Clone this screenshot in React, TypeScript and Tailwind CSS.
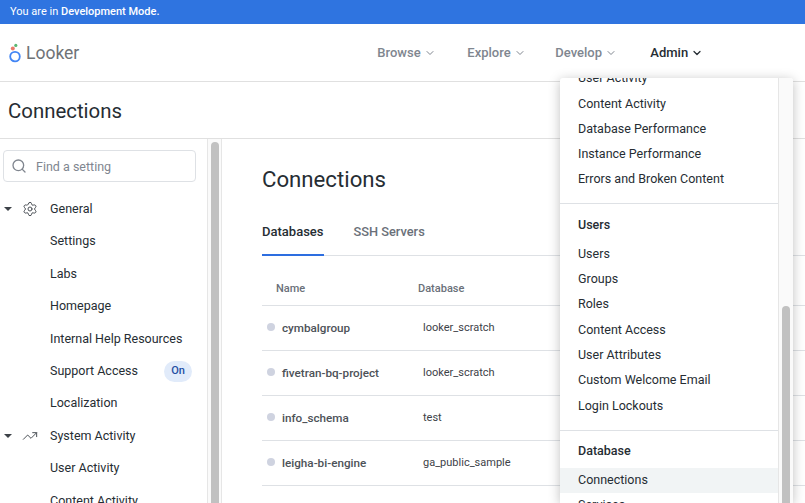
import { ChevronDown, Search, Settings, TrendingUp } from 'lucide-react';

type SideItem = {
    label: string;
    icon?: 'gear' | 'trend';
    badge?: string;
};

const sideItems: SideItem[] = [
    { label: 'General', icon: 'gear' },
    { label: 'Settings' },
    { label: 'Labs' },
    { label: 'Homepage' },
    { label: 'Internal Help Resources' },
    { label: 'Support Access', badge: 'On' },
    { label: 'Localization' },
    { label: 'System Activity', icon: 'trend' },
    { label: 'User Activity' },
    { label: 'Content Activity' },
];

const rows = [
    { name: 'cymbalgroup', db: 'looker_scratch' },
    { name: 'fivetran-bq-project', db: 'looker_scratch' },
    { name: 'info_schema', db: 'test' },
    { name: 'leigha-bi-engine', db: 'ga_public_sample' },
];

const NavItem = ({ label, active }: { label: string; active?: boolean }) => (
    <div className={`flex items-center gap-[3px] text-[13px] font-medium ${active ? 'text-[#262d33]' : 'text-[#80868f]'}`}>
        <span>{label}</span>
        <ChevronDown className="w-3 h-3" strokeWidth={active ? 2.5 : 2} />
    </div>
);

const MenuItem = ({ label, selected }: { label: string; selected?: boolean }) => (
    <div className={`h-[25.3px] flex items-center pl-[18px] text-[12.5px] text-[#262d33] ${selected ? 'bg-[#f1f4f5]' : ''}`}>
        {label}
    </div>
);

const MenuHeader = ({ label }: { label: string }) => (
    <div className="h-[25px] flex items-center pl-[18px] text-[12.5px] font-medium text-[#262d33]">
        {label}
    </div>
);

const Logo = () => (
    <div className="flex items-center gap-[2px]">
        <svg width="14" height="20" viewBox="0 0 14 20" fill="none">
            <circle cx="7" cy="13.6" r="4.8" stroke="#4285f4" strokeWidth="1.8" />
            <circle cx="4.8" cy="5.6" r="2" fill="#ea7a6a" />
            <circle cx="7.8" cy="2.4" r="1.6" fill="#5cb874" />
        </svg>
        <span className="ml-[2px] pt-[2px] text-[17.5px] leading-none text-[#6f7377]">Looker</span>
    </div>
);

export default function App() {
    return (
        <div className="relative w-[805px] h-[503px] overflow-hidden bg-white flex flex-col font-['Roboto',sans-serif]">
            <div className="h-6 shrink-0 bg-[#2f74e0] text-white text-[11px] leading-6 pl-[10px] pb-[2px]">
                You are in <span className="font-medium">Development Mode.</span>
            </div>

            <div className="h-[58px] shrink-0 flex items-center border-b border-[#e0e0e0] pl-[8px]">
                <Logo />
                <div className="ml-[298px] flex items-center w-[340px]">
                    <div className="w-[90px]"><NavItem label="Browse" /></div>
                    <div className="w-[88px]"><NavItem label="Explore" /></div>
                    <div className="w-[95px]"><NavItem label="Develop" /></div>
                    <NavItem label="Admin" active />
                </div>
            </div>

            <div className="h-[57px] shrink-0 flex items-center border-b border-[#e0e0e0] pl-2 pt-[3px] text-[20.4px] text-[#262d33]">
                Connections
            </div>

            <div className="flex flex-1 min-h-0">
                <div className="w-[207px] shrink-0 pl-[3px] pr-[11px] pt-[11px] overflow-hidden">
                    <div className="h-8 flex items-center border border-[#dee1e5] rounded-[4px] pl-[7px] gap-[9px] text-[12.5px] text-[#80868f]">
                        <Search className="w-4 h-4 text-[#80868f]" />
                        <span className="pt-[2px]">Find a setting</span>
                    </div>
                    <div className="mt-[11px] -ml-[3px]">
                        {sideItems.map((item) => (
                            <div key={item.label} className="h-[32.45px] shrink-0 flex items-center text-[12.5px] text-[#262d33]">
                                <div className="w-[50px] shrink-0 flex items-center pl-1">
                                    {item.icon && (
                                        <>
                                            <span className="w-0 h-0 border-x-[4px] border-x-transparent border-t-[4px] border-t-[#3d4248]" />
                                            <span className="ml-[10px]">
                                                {item.icon === 'gear' ? (
                                                    <Settings className="w-4 h-4 text-[#4d5258]" strokeWidth={1.5} />
                                                ) : (
                                                    <TrendingUp className="w-4 h-4 text-[#4d5258]" strokeWidth={1.5} />
                                                )}
                                            </span>
                                        </>
                                    )}
                                </div>
                                <span>{item.label}</span>
                                {item.badge && (
                                    <span className="ml-auto mr-[4px] w-7 h-[21px] rounded-full bg-[#e1ebfa] text-[#1f4fa3] text-[11px] font-medium flex items-center justify-center">
                                        {item.badge}
                                    </span>
                                )}
                            </div>
                        ))}
                    </div>
                </div>

                <div className="w-[15px] shrink-0 border-x border-[#e6e6e6] bg-[#fafafa] pt-[3px] flex justify-center">
                    <div className="w-2 h-full rounded-t-full bg-[#c1c1c1]" />
                </div>

                <div className="flex-1 pl-[40px] pt-[26px]">
                    <div className="text-[22.2px] leading-[28px] text-[#262d33]">Connections</div>
                    <div className="mt-[24px] flex gap-[30px] border-b border-[#dee1e5] h-[39px] text-[13px] font-medium">
                        <div className="h-[39px] pt-[5px] border-b-2 border-[#2d6ee0] text-[#262d33]">Databases</div>
                        <div className="pt-[5px] text-[12.8px] text-[#6a7079]">SSH Servers</div>
                    </div>
                    <div className="mt-[16px] h-[34px] flex items-center border-b border-[#dee1e5] pt-[1px] text-[11px] font-medium text-[#6a7079]">
                        <div className="w-[156px] pl-[14px]">Name</div>
                        <div>Database</div>
                    </div>
                    {rows.map((row) => (
                        <div key={row.name} className="h-[45px] flex items-center border-b border-[#dee1e5]">
                            <div className="w-[161px] flex items-center pl-[5px] gap-[7px] text-[11.7px] font-medium text-[#4d5258]">
                                <span className="w-2 h-2 rounded-full bg-[#cfd3e0] -mt-[2px]" />
                                <span className="pt-[1px]">{row.name}</span>
                            </div>
                            <div className="text-[11px] text-[#3d4248]">{row.db}</div>
                        </div>
                    ))}
                </div>
            </div>

            <div className="absolute left-[560px] top-[78px] w-[233px] h-[425px] bg-white rounded-t-[3px] shadow-[0_2px_12px_rgba(0,0,0,0.25)] flex overflow-hidden">
                <div className="w-[219px] shrink-0 border-r border-[#e6e6e6]">
                    <div className="-mt-[12px]">
                        <MenuItem label="User Activity" />
                        <MenuItem label="Content Activity" />
                        <MenuItem label="Database Performance" />
                        <MenuItem label="Instance Performance" />
                        <MenuItem label="Errors and Broken Content" />
                    </div>
                    <div className="mt-[11px] border-t border-[#dee1e5] pt-[8px]">
                        <MenuHeader label="Users" />
                        <div className="mt-[4px]">
                            <MenuItem label="Users" />
                            <MenuItem label="Groups" />
                            <MenuItem label="Roles" />
                            <MenuItem label="Content Access" />
                            <MenuItem label="User Attributes" />
                            <MenuItem label="Custom Welcome Email" />
                            <MenuItem label="Login Lockouts" />
                        </div>
                    </div>
                    <div className="mt-[11px] border-t border-[#dee1e5] pt-[8px]">
                        <MenuHeader label="Database" />
                        <div className="mt-[4px]">
                            <MenuItem label="Connections" selected />
                            <MenuItem label="Services" />
                        </div>
                    </div>
                </div>
                <div className="flex-1 bg-[#fafafa] flex flex-col items-center pt-[228px]">
                    <div className="w-2 flex-1 rounded-t-full bg-[#c1c1c1]" />
                </div>
            </div>
        </div>
    );
}
